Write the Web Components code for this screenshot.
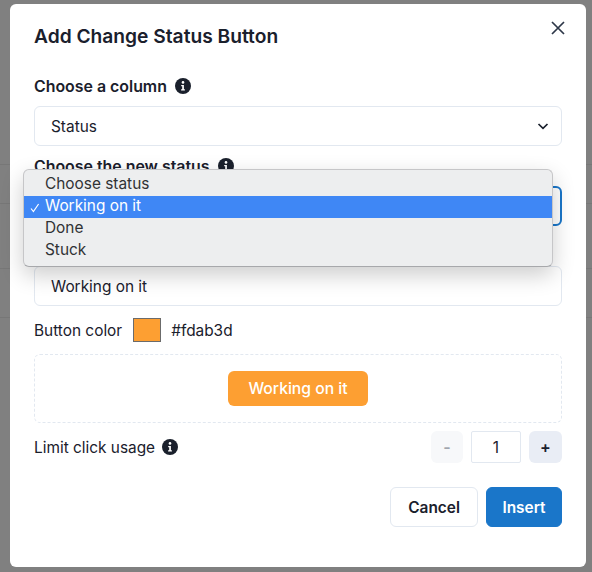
<!DOCTYPE html>
<html>
<head>
<meta charset="utf-8">
<style>
  html, body { margin: 0; height: 100%; }
  body {
    background-color: #808080;
    /* faint table rows of the page behind the dialog */
    background-image:
      linear-gradient(#777, #777), linear-gradient(#777, #777),
      linear-gradient(#777, #777), linear-gradient(#777, #777);
    background-size: 100% 1px;
    background-position: 0 164px, 0 203px, 0 268px, 0 317px;
    background-repeat: no-repeat;
    font-family: Inter, "Liberation Sans", sans-serif;
    color: #1a202c;
    overflow: hidden;
  }
</style>
</head>
<body>
<modal-dialog heading="Add Change Status Button">
  <form-field label="Choose a column" info>
    <select-box value="Status"></select-box>
  </form-field>
  <form-field label="Choose the new status" info>
    <select-box focused>
      <status-menu></status-menu>
    </select-box>
  </form-field>
  <form-field label="Button text">
    <text-box value="Working on it"></text-box>
  </form-field>
  <color-row value="#fdab3d" label="Button color"></color-row>
  <button-preview text="Working on it" color="#fd9f32"></button-preview>
  <limit-row label="Limit click usage" value="1"></limit-row>
  <div slot="footer">
    <action-button>Cancel</action-button>
    <action-button primary>Insert</action-button>
  </div>
</modal-dialog>

<script>
const infoIcon = `
  <svg width="16" height="16" viewBox="0 0 16 16" style="display:block;flex:none">
    <circle cx="8" cy="8" r="8" fill="#1a202c"/>
    <circle cx="8" cy="4.4" r="1.3" fill="#fff"/>
    <path d="M6.2 6.9h2.7v4.4h1v1.3H6.1v-1.3h1.1V8.2h-1z" fill="#fff"/>
  </svg>`;

class ModalDialog extends HTMLElement {
  constructor() {
    super();
    this.attachShadow({ mode: 'open' });
    this.shadowRoot.innerHTML = `
      <style>
        :host { display: block; }
        .dialog {
          position: relative;
          box-sizing: border-box;
          width: 576px;
          height: 563px;
          margin: 4px 0 0 10px;
          padding: 20px 24px 24px;
          background: #fff;
          border-radius: 6px;
          display: flex;
          flex-direction: column;
        }
        h2 {
          margin: 0 0 26px;
          font-size: 19.2px;
          line-height: 24px;
          font-weight: 600;
        }
        .close {
          position: absolute;
          top: 16px;
          right: 20px;
          width: 16px;
          height: 16px;
        }
        .body { display: flex; flex-direction: column; }
        ::slotted([slot="footer"]) {
          display: flex;
          justify-content: flex-end;
          gap: 8px;
          margin-top: 24px;
        }
      </style>
      <div class="dialog">
        <h2>${this.getAttribute('heading')}</h2>
        <svg class="close" viewBox="0 0 16 16">
          <path d="M2 2l12 12M14 2L2 14" stroke="#2d3748" stroke-width="1.7" fill="none"/>
        </svg>
        <div class="body"><slot></slot></div>
        <slot name="footer"></slot>
      </div>`;
  }
}

class FormField extends HTMLElement {
  constructor() {
    super();
    this.attachShadow({ mode: 'open' });
    this.shadowRoot.innerHTML = `
      <style>
        :host { display: block; margin-bottom: 8px; }
        .label {
          display: flex;
          align-items: center;
          gap: 8px;
          height: 24px;
          margin-bottom: 8px;
          font-size: 15.9px;
          font-weight: 600;
        }
      </style>
      <div class="label">${this.getAttribute('label')}${this.hasAttribute('info') ? infoIcon : ''}</div>
      <slot></slot>`;
  }
}

class SelectBox extends HTMLElement {
  constructor() {
    super();
    this.attachShadow({ mode: 'open' });
    this.shadowRoot.innerHTML = `
      <style>
        :host { display: block; position: relative; }
        .box {
          box-sizing: border-box;
          height: 40px;
          padding: 0 16px;
          display: flex;
          align-items: center;
          justify-content: space-between;
          border: 1px solid #e2e8f0;
          border-radius: 6px;
          background: #fff;
          font-size: 15.4px;
        }
        :host([focused]) .box { border: 2px solid #1a76c9; }
        svg { margin-right: -4px; }
      </style>
      <div class="box">
        <span>${this.getAttribute('value') || ''}</span>
        <svg width="12" height="12" viewBox="0 0 12 12">
          <path d="M1.5 4l4.5 4.4L10.5 4" stroke="#1a202c" stroke-width="1.7" fill="none"/>
        </svg>
      </div>
      <slot></slot>`;
  }
}

class StatusMenu extends HTMLElement {
  constructor() {
    super();
    this.attachShadow({ mode: 'open' });
    const items = ['Choose status', 'Working on it', 'Done', 'Stuck'];
    this.shadowRoot.innerHTML = `
      <style>
        :host {
          position: absolute;
          z-index: 5;
          top: -17px;
          left: -11px;
          width: 530px;
          box-sizing: border-box;
          padding: 4px 0;
          background: #edeeef;
          border: 1px solid #c6c6c8;
          border-bottom-color: #a7a8ab;
          border-radius: 6px;
          box-shadow: 0 8px 22px rgba(0, 0, 0, 0.2);
          font-size: 15.4px;
          color: #303235;
        }
        .item {
          position: relative;
          height: 22px;
          line-height: 20px;
          padding-left: 21px;
        }
        .item.on { background: #3f87f5; color: #fff; }
        .item svg { position: absolute; left: 6px; top: 7px; }
      </style>
      ${items.map((t, i) => `
        <div class="item ${i === 1 ? 'on' : ''}">
          ${i === 1 ? '<svg width="10" height="10" viewBox="0 0 10 10"><path d="M1 5.5l2.4 3L8.6 1" stroke="#fff" stroke-width="1.2" fill="none"/></svg>' : ''}${t}
        </div>`).join('')}`;
  }
}

class TextBox extends HTMLElement {
  constructor() {
    super();
    this.attachShadow({ mode: 'open' });
    this.shadowRoot.innerHTML = `
      <style>
        :host { display: block; }
        .box {
          box-sizing: border-box;
          height: 40px;
          padding: 0 16px;
          display: flex;
          align-items: center;
          border: 1px solid #e2e8f0;
          border-radius: 6px;
          font-size: 15.4px;
        }
      </style>
      <div class="box">${this.getAttribute('value')}</div>`;
  }
}

class ColorRow extends HTMLElement {
  constructor() {
    super();
    this.attachShadow({ mode: 'open' });
    this.shadowRoot.innerHTML = `
      <style>
        :host {
          display: flex;
          align-items: center;
          height: 24px;
          margin: 4px 0 12px;
          font-size: 15.4px;
        }
        .swatch {
          box-sizing: border-box;
          width: 28px;
          height: 24px;
          margin: 0 10px 0 11px;
          background: #fd9f32;
          border: 1px solid #6b6b6b;
        }
      </style>
      <span>${this.getAttribute('label')}</span>
      <span class="swatch"></span>
      <span>${this.getAttribute('value')}</span>`;
  }
}

class ButtonPreview extends HTMLElement {
  constructor() {
    super();
    this.attachShadow({ mode: 'open' });
    this.shadowRoot.innerHTML = `
      <style>
        :host {
          display: flex;
          justify-content: center;
          align-items: center;
          box-sizing: border-box;
          height: 69px;
          border: 1px dashed #e2e8f0;
          border-radius: 6px;
        }
        .preview {
          width: 140px;
          height: 35px;
          display: flex;
          align-items: center;
          justify-content: center;
          border-radius: 6px;
          background: ${this.getAttribute('color')};
          color: #fff;
          font-size: 15.7px;
          font-weight: 500;
        }
      </style>
      <div class="preview">${this.getAttribute('text')}</div>`;
  }
}

class LimitRow extends HTMLElement {
  constructor() {
    super();
    this.attachShadow({ mode: 'open' });
    this.shadowRoot.innerHTML = `
      <style>
        :host {
          display: flex;
          align-items: center;
          height: 32px;
          margin-top: 8px;
          font-size: 15.4px;
        }
        .name { display: flex; align-items: center; gap: 7px; flex: 1; }
        .stepper { display: flex; gap: 8px; }
        .step {
          width: 32px;
          height: 32px;
          display: flex;
          align-items: center;
          justify-content: center;
          border-radius: 6px;
          background: #e9edf5;
          font-size: 16px;
          font-weight: 600;
        }
        .step.plus { width: 33px; }
        .step.off { background: #f7f8fa; color: #a0a5ad; }
        .value {
          box-sizing: border-box;
          width: 50px;
          height: 32px;
          display: flex;
          align-items: center;
          justify-content: center;
          border: 1px solid #e2e8f0;
          border-radius: 2px;
          font-size: 15.4px;
        }
      </style>
      <div class="name">${this.getAttribute('label')}${infoIcon}</div>
      <div class="stepper">
        <div class="step off">-</div>
        <div class="value">${this.getAttribute('value')}</div>
        <div class="step plus">+</div>
      </div>`;
  }
}

class ActionButton extends HTMLElement {
  constructor() {
    super();
    this.attachShadow({ mode: 'open' });
    this.shadowRoot.innerHTML = `
      <style>
        :host {
          display: flex;
          align-items: center;
          box-sizing: border-box;
          height: 40px;
          padding: 0 17px;
          border: 1px solid #e2e8f0;
          border-radius: 6px;
          font-size: 15.4px;
          font-weight: 600;
          background: #fff;
        }
        :host([primary]) {
          padding: 0 15.5px;
          background: #1a76c9;
          border-color: #1a76c9;
          color: #fff;
        }
      </style>
      <slot></slot>`;
  }
}

customElements.define('modal-dialog', ModalDialog);
customElements.define('form-field', FormField);
customElements.define('select-box', SelectBox);
customElements.define('status-menu', StatusMenu);
customElements.define('text-box', TextBox);
customElements.define('color-row', ColorRow);
customElements.define('button-preview', ButtonPreview);
customElements.define('limit-row', LimitRow);
customElements.define('action-button', ActionButton);
</script>
</body>
</html>
